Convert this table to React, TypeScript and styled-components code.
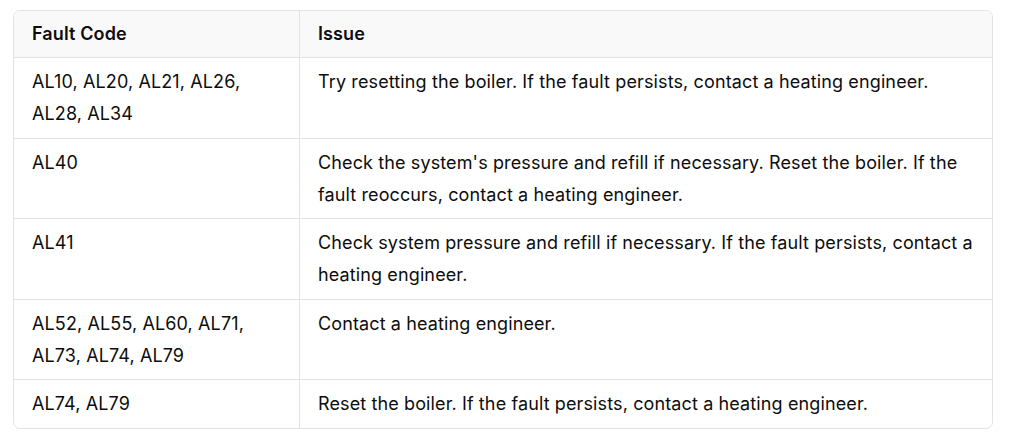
import styled, { createGlobalStyle } from "styled-components";

const GlobalStyle = createGlobalStyle`
    body {
        margin: 0;
        background: #ffffff;
        font-family: Inter, "Noto Sans", sans-serif;
        color: #0d0d0d;
    }
`

const rows = [
    { code: "AL10, AL20, AL21, AL26, AL28, AL34", issue: "Try resetting the boiler. If the fault persists, contact a heating engineer." },
    { code: "AL40", issue: "Check the system's pressure and refill if necessary. Reset the boiler. If the fault reoccurs, contact a heating engineer." },
    { code: "AL41", issue: "Check system pressure and refill if necessary. If the fault persists, contact a heating engineer." },
    { code: "AL52, AL55, AL60, AL71, AL73, AL74, AL79", issue: "Contact a heating engineer." },
    { code: "AL74, AL79", issue: "Reset the boiler. If the fault persists, contact a heating engineer." },
]

export default function App() {
    return (
        <>
            <GlobalStyle />
            <Page>
                <TableFrame>
                    <Table>
                        <colgroup>
                            <col style={{ width: 286 }} />
                            <col />
                        </colgroup>
                        <thead>
                            <tr>
                                <Th>Fault Code</Th>
                                <Th $last>Issue</Th>
                            </tr>
                        </thead>
                        <tbody>
                            {rows.map((r, i) => (
                                <tr key={i}>
                                    <Td $bottom={i === rows.length - 1}>{r.code}</Td>
                                    <Td $bottom={i === rows.length - 1} $last>{r.issue}</Td>
                                </tr>
                            ))}
                        </tbody>
                    </Table>
                </TableFrame>
            </Page>
        </>
    )
}

const Page = styled.div`
    padding: 10px 31px 0 13px;
`

const TableFrame = styled.div`
    border: 1px solid #e3e3e3;
    border-radius: 7px;
    overflow: hidden;
    width: 980px;
    box-sizing: border-box;
`

const Table = styled.table`
    width: 100%;
    table-layout: fixed;
    border-collapse: separate;
    border-spacing: 0;
    font-size: 18px;
    line-height: 32px;
    letter-spacing: 0.12px;
`

const Th = styled.th<{ $last?: boolean }>`
    text-align: left;
    font-weight: 600;
    background: #f9f9f9;
    padding: 7px 18px;
    border-bottom: 1px solid #e3e3e3;
    border-right: ${p => p.$last ? "none" : "1px solid #e3e3e3"};
`

const Td = styled.td<{ $last?: boolean; $bottom?: boolean }>`
    vertical-align: top;
    font-weight: 400;
    padding: 8px 6px 7.5px 18px;
    border-bottom: ${p => p.$bottom ? "none" : "1px solid #e3e3e3"};
    border-right: ${p => p.$last ? "none" : "1px solid #e3e3e3"};
`
